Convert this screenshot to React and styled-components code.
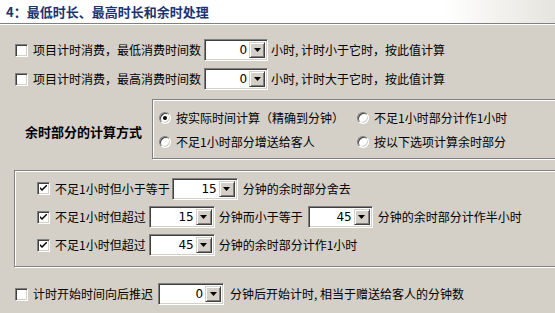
import React from "react";
import styled, { createGlobalStyle } from "styled-components";

const GlobalStyle = createGlobalStyle`
  html, body {
    margin: 0;
    padding: 0;
    background: #d4d0c8;
    overflow: hidden;
  }
  body {
    font-family: "Noto Sans CJK SC", "Noto Sans", sans-serif;
    font-size: 12px;
    color: #000;
  }
`;

const Page = styled.div`
  width: 555px;
  height: 313px;
  background: #d4d0c8;
  overflow: hidden;
`;

const Header = styled.div`
  height: 23px;
  background: linear-gradient(to right, #fff 0%, #fff 80%, #e6e4de 100%);
  border-bottom: 1px solid #808080;
  box-shadow: 0 1px 0 #fff;
  display: flex;
  align-items: center;
  padding-left: 6px;
`;

const Title = styled.div`
  font-size: 13px;
  font-weight: bold;
  color: #1b3470;
  line-height: 15px;
`;

const Body = styled.div`
  display: flex;
  flex-direction: column;
  padding-top: 15px;
`;

const Row = styled.div`
  display: flex;
  align-items: center;
  height: ${(p) => p.$h || 22}px;
  margin-top: ${(p) => p.$mt || 0}px;
  padding-left: ${(p) => p.$pl || 0}px;
  white-space: nowrap;
  line-height: 14px;
`;

const Text = styled.span`
  margin-left: ${(p) => p.$ml || 0}px;
  margin-right: ${(p) => p.$mr || 0}px;
`;

const Box = styled.span`
  width: 13px;
  height: 13px;
  box-sizing: border-box;
  background: #fff;
  border: 1px solid;
  border-color: #808080 #fff #fff #808080;
  box-shadow: inset 1px 1px #404040, inset -1px -1px #d4d0c8;
  display: inline-flex;
  align-items: center;
  justify-content: center;
  margin-right: 5px;
  flex: none;
`;

const Check = ({ checked }) => (
  <Box>
    {checked && (
      <svg width="7" height="7" viewBox="0 0 7 7">
        <path d="M0 2 L0 4 L2 6 L7 1 L7 -1 L2 4 Z" fill="#000" />
      </svg>
    )}
  </Box>
);

const RadioRing = styled.span`
  width: 12px;
  height: 12px;
  box-sizing: border-box;
  border-radius: 50%;
  background: #fff;
  border: 1px solid;
  border-color: #808080 #fff #fff #808080;
  box-shadow: inset 1px 1px #404040, inset -1px -1px #d4d0c8;
  display: inline-flex;
  align-items: center;
  justify-content: center;
  margin-right: 5px;
  flex: none;
`;

const Dot = styled.span`
  width: 4px;
  height: 4px;
  border-radius: 50%;
  background: #000;
`;

const RadioItem = styled.div`
  display: flex;
  align-items: center;
  height: 24px;
  white-space: nowrap;
  line-height: 14px;
`;

const Radio = ({ on, children }) => (
  <RadioItem>
    <RadioRing>{on && <Dot />}</RadioRing>
    <span>{children}</span>
  </RadioItem>
);

const ComboWrap = styled.div`
  width: ${(p) => p.$w}px;
  height: 22px;
  box-sizing: border-box;
  border: 1px solid;
  border-color: #808080 #fff #fff #808080;
  box-shadow: inset 1px 1px #404040, inset -1px -1px #d4d0c8;
  background: #fff;
  display: flex;
  align-items: center;
  padding: 2px;
  margin-left: ${(p) => p.$ml || 0}px;
  margin-right: ${(p) => p.$mr || 0}px;
  flex: none;
`;

const ComboValue = styled.span`
  flex: 1;
  text-align: right;
  padding-right: 2px;
  font-family: "DejaVu Sans", "Liberation Sans", sans-serif;
  font-size: 12px;
  line-height: 14px;
`;

const DropBtn = styled.span`
  width: 16px;
  height: 16px;
  box-sizing: border-box;
  background: #d4d0c8;
  border: 1px solid;
  border-color: #d4d0c8 #404040 #404040 #d4d0c8;
  box-shadow: inset 1px 1px #fff, inset -1px -1px #808080;
  display: inline-flex;
  align-items: center;
  justify-content: center;
`;

const Combo = ({ value, w = 65, ml, mr }) => (
  <ComboWrap $w={w} $ml={ml} $mr={mr}>
    <ComboValue>{value}</ComboValue>
    <DropBtn>
      <svg width="7" height="4" viewBox="0 0 7 4">
        <path d="M0 0 H7 L3.5 4 Z" fill="#000" />
      </svg>
    </DropBtn>
  </ComboWrap>
);

const Section = styled.div`
  display: flex;
  align-items: center;
  margin-top: 9px;
`;

const SectionLabel = styled.div`
  width: 127px;
  padding-left: 25px;
  padding-top: 5px;
  font-size: 13px;
  font-weight: bold;
  line-height: 15px;
  white-space: nowrap;
`;

const GroupBox = styled.div`
  border: 1px solid #808080;
  box-shadow: inset 1px 1px #fff, 1px 1px #fff;
  margin-right: -10px;
  margin-left: ${(p) => p.$ml || 0}px;
  margin-top: ${(p) => p.$mt || 0}px;
  flex: 1;
`;

const RadioGrid = styled.div`
  display: grid;
  grid-template-columns: 198px 200px;
  padding: 6px 0 4px 6px;
`;

const CheckRows = styled.div`
  display: flex;
  flex-direction: column;
  padding: 3px 0 7px 22px;
`;

export default function App() {
  return (
    <Page>
      <GlobalStyle />
      <Header>
        <Title>4：最低时长、最高时长和余时处理</Title>
      </Header>
      <Body>
        <Row $pl={15}>
          <Check />
          <Text>项目计时消费，最低消费时间数</Text>
          <Combo value="0" w={64} ml={3} mr={3} />
          <Text>小时, 计时小于它时，按此值计算</Text>
        </Row>
        <Row $pl={15} $mt={7}>
          <Check />
          <Text>项目计时消费，最高消费时间数</Text>
          <Combo value="0" w={64} ml={3} mr={3} />
          <Text>小时, 计时大于它时，按此值计算</Text>
        </Row>
        <Section>
          <SectionLabel>余时部分的计算方式</SectionLabel>
          <GroupBox>
            <RadioGrid>
              <Radio on>按实际时间计算（精确到分钟）</Radio>
              <Radio>不足1小时部分计作1小时</Radio>
              <Radio>不足1小时部分增送给客人</Radio>
              <Radio>按以下选项计算余时部分</Radio>
            </RadioGrid>
          </GroupBox>
        </Section>
        <GroupBox $ml={14} $mt={11}>
          <CheckRows>
            <Row $h={29}>
              <Check checked />
              <Text>不足1小时但小于等于</Text>
              <Combo value="15" w={66} ml={2} mr={5} />
              <Text>分钟的余时部分舍去</Text>
            </Row>
            <Row $h={28}>
              <Check checked />
              <Text>不足1小时但超过</Text>
              <Combo value="15" w={66} ml={3} mr={4} />
              <Text>分钟而小于等于</Text>
              <Combo value="45" w={65} ml={5} mr={5} />
              <Text>分钟的余时部分计作半小时</Text>
            </Row>
            <Row $h={28}>
              <Check checked />
              <Text>不足1小时但超过</Text>
              <Combo value="45" w={66} ml={3} mr={4} />
              <Text>分钟的余时部分计作1小时</Text>
            </Row>
          </CheckRows>
        </GroupBox>
        <Row $pl={15} $mt={16}>
          <Check />
          <Text>计时开始时间向后推迟</Text>
          <Combo value="0" w={66} ml={5} mr={6} />
          <Text>分钟后开始计时, 相当于赠送给客人的分钟数</Text>
        </Row>
      </Body>
    </Page>
  );
}
